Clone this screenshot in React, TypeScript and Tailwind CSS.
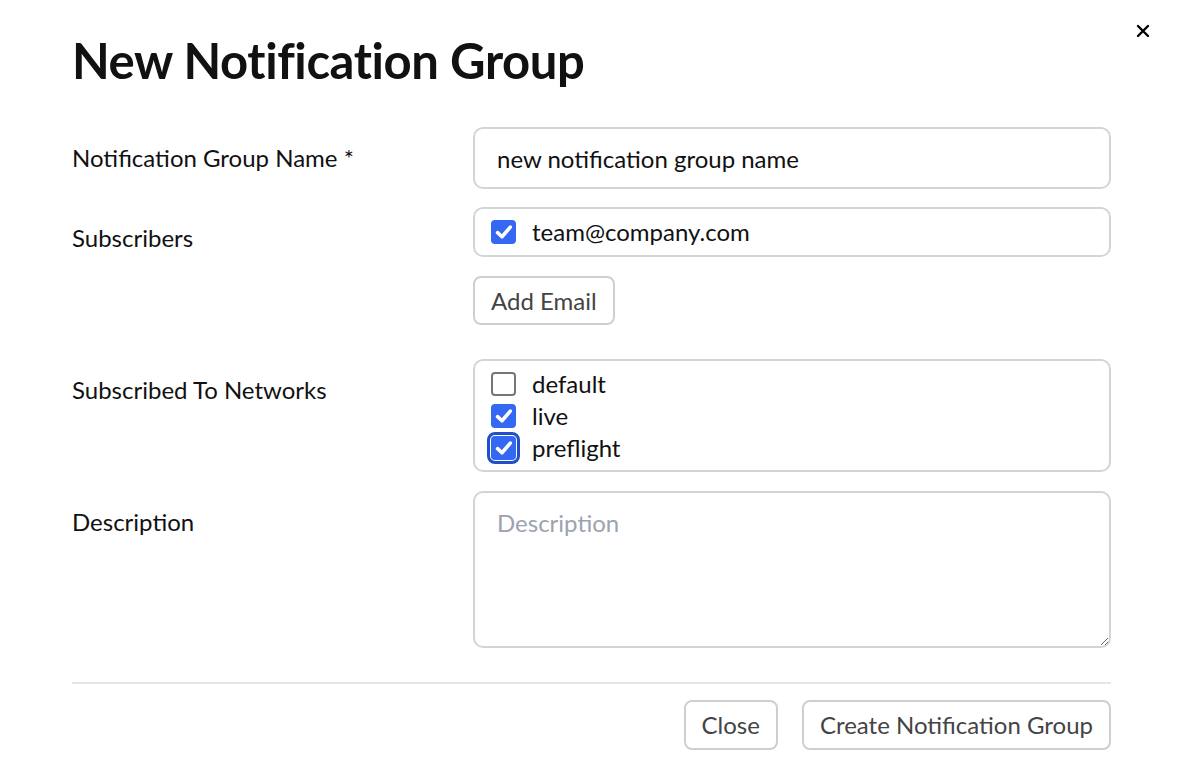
import { useState } from "react";

function Check({ checked, focused }: { checked: boolean; focused?: boolean }) {
  return (
    <span
      className={`flex h-[24px] w-[25px] shrink-0 items-center justify-center rounded-[4px] ${
        checked ? "bg-[#3568f2]" : "border-2 border-[#767676] bg-white"
      } ${focused ? "outline-[3px] outline-offset-[1px] outline-[#1f4fc9] outline-solid" : ""}`}
    >
      {checked && (
        <svg width="18" height="16" viewBox="0 0 16 14" fill="none">
          <path d="M2.3 7.6 L6.2 11.2 L13.6 2.6" stroke="white" strokeWidth="3.2" strokeLinecap="round" strokeLinejoin="round" />
        </svg>
      )}
    </span>
  );
}

export default function App() {
  const [name, setName] = useState("new notification group name");
  const [subs, setSubs] = useState(true);
  const [nets, setNets] = useState({ default: false, live: true, preflight: true });

  return (
    <div className="relative min-h-[784px] bg-white px-[72px] pt-[28px] text-[#111] [font-family:Lato,'Noto_Sans',sans-serif]">
      <button className="absolute right-[30px] top-[24px] text-[22px] leading-none text-black">
        <svg width="14" height="14" viewBox="0 0 14 14">
          <path d="M2 2 L12 12 M12 2 L2 12" stroke="black" strokeWidth="2.4" strokeLinecap="round" />
        </svg>
      </button>
      <h1 className="text-[49px] font-bold leading-[64px] tracking-[-0.4px]">New Notification Group</h1>

      <div className="mt-[35px] w-[1039px] text-[24px]">
        <div className="grid grid-cols-[401px_1fr]">
          <label className="pt-[15px] leading-[32px]">Notification Group Name *</label>
          <input
            value={name}
            onChange={(e) => setName(e.target.value)}
            className="h-[62px] rounded-[10px] border-2 border-[#d1d5db] px-[22px] text-[24px] text-[#111] outline-none"
          />
        </div>

        <div className="mt-[18px] grid grid-cols-[401px_1fr]">
          <label className="pt-[15px] leading-[32px]">Subscribers</label>
          <div>
            <div
              className="flex h-[50px] items-center gap-[16px] rounded-[10px] border-2 border-[#d1d5db] px-[16px]"
              onClick={() => setSubs(!subs)}
            >
              <Check checked={subs} />
              <span className="leading-[32px]">team@company.com</span>
            </div>
            <button className="mt-[19px] h-[49px] rounded-[8px] border-2 border-[#d2cecb] px-[16px] text-[24px] text-[#444]">
              Add Email
            </button>
          </div>
        </div>

        <div className="mt-[34px] grid grid-cols-[401px_1fr]">
          <label className="pt-[15px] leading-[32px]">Subscribed To Networks</label>
          <div className="flex h-[113px] flex-col justify-center rounded-[10px] border-2 border-[#d1d5db] px-[16px]">
            {(["default", "live", "preflight"] as const).map((k) => (
              <div
                key={k}
                className="flex h-[32px] items-center gap-[16px]"
                onClick={() => setNets({ ...nets, [k]: !nets[k] })}
              >
                <Check checked={nets[k]} focused={k === "preflight"} />
                <span className="leading-[32px]">{k}</span>
              </div>
            ))}
          </div>
        </div>

        <div className="mt-[19px] grid grid-cols-[401px_1fr]">
          <label className="pt-[15px] leading-[32px]">Description</label>
          <textarea
            placeholder="Description"
            className="h-[157px] rounded-[10px] border-2 border-[#d1d5db] px-[22px] py-[14px] text-[24px] leading-[32px] outline-none placeholder:text-[#9ca3af]"
          />
        </div>

        <div className="mt-[34px] h-[2px] bg-[#e5e5ea]" />

        <div className="mt-[16px] flex justify-end gap-[24px]">
          <button className="h-[50px] rounded-[8px] border-2 border-[#d2cecb] px-[16px] text-[24px] text-[#444]">Close</button>
          <button className="h-[50px] rounded-[8px] border-2 border-[#d2cecb] px-[16px] text-[24px] text-[#444]">
            Create Notification Group
          </button>
        </div>
      </div>
    </div>
  );
}
